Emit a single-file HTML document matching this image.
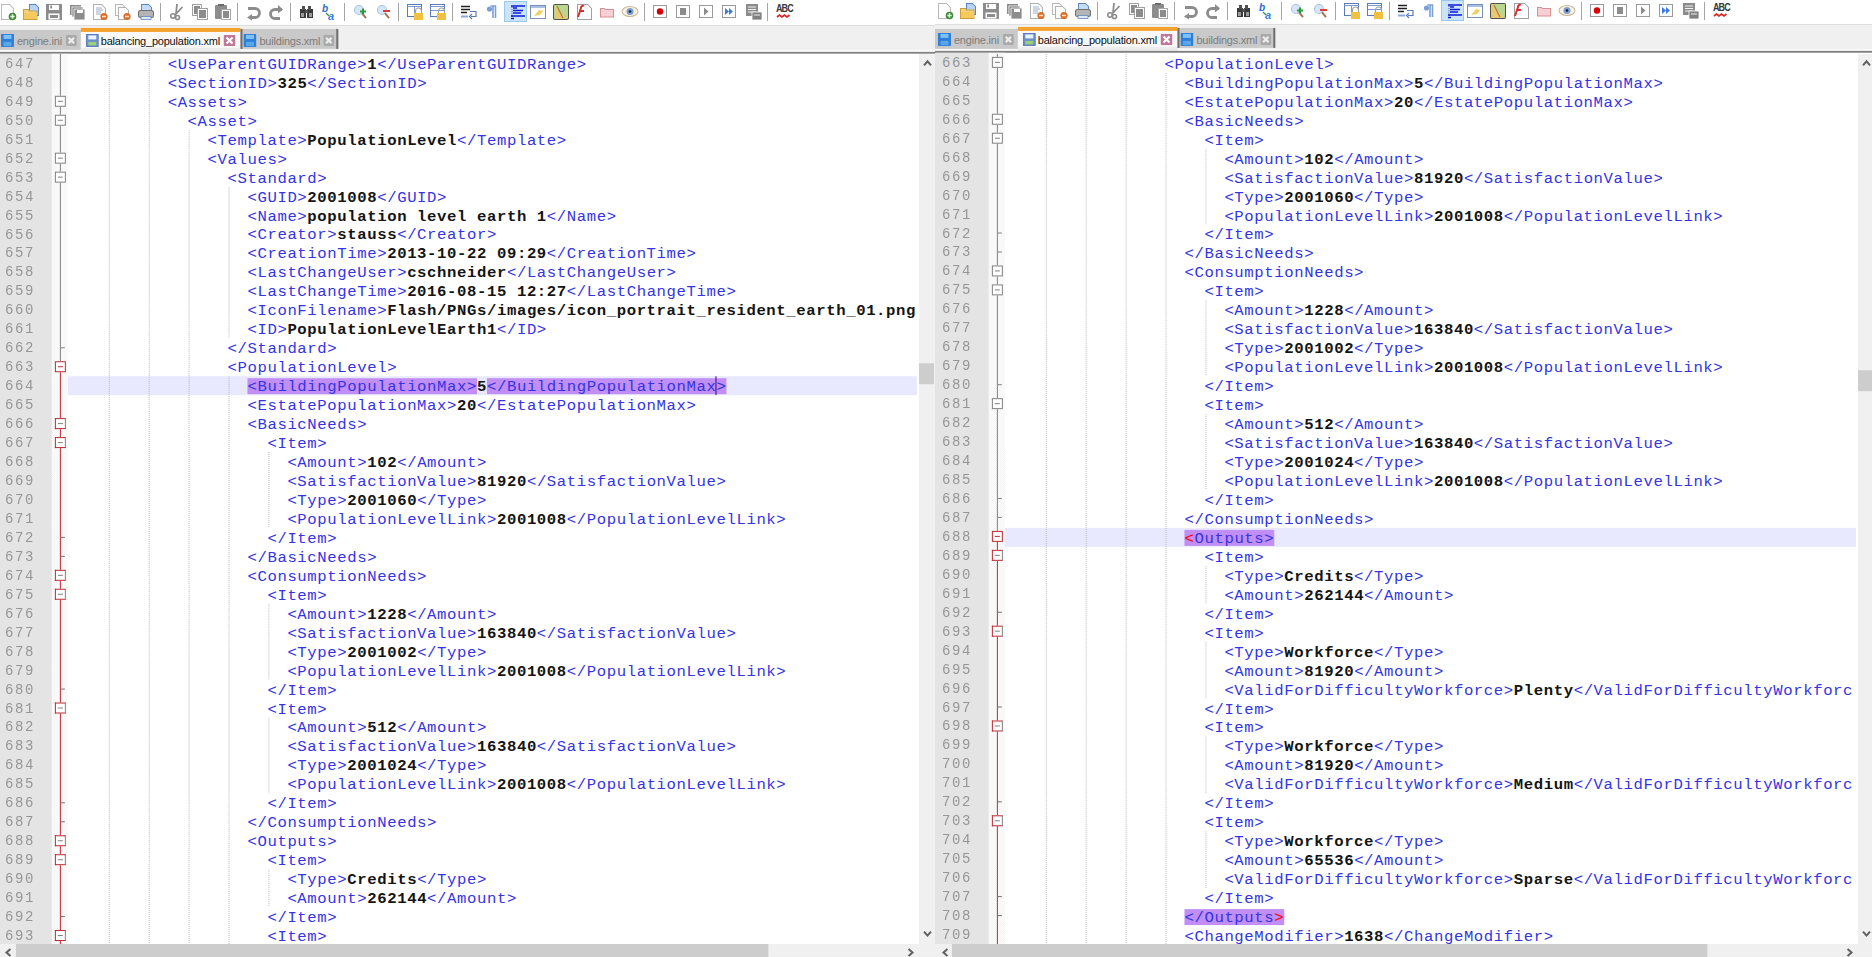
<!DOCTYPE html>
<html><head><meta charset="utf-8"><style>
html,body{margin:0;padding:0;}
body{width:1872px;height:957px;overflow:hidden;position:relative;background:#fff;font-family:"Liberation Sans",sans-serif;}
#root{position:absolute;left:0;top:0;width:1876px;height:959px;overflow:hidden;transform-origin:0 0;transform:scale(0.997868,0.997914);}
.pane{position:absolute;top:0;height:959px;overflow:hidden;}
.pane div,.pane svg{position:absolute;}
.tb{left:0;right:0;height:25px;background:#fff;border-bottom:1px solid #dcdcdc;}
.tabbar{left:0;right:0;height:26px;background:#f0f0f0;}
.darkline{left:0;right:0;height:2px;background:linear-gradient(#767676,#9a9a9a);}
.lnm{left:0;width:54px;background:#e4e4e4;}
.fm{left:54px;width:16px;background-color:#fff;background-image:conic-gradient(#f2f2f2 25%,#fff 25%,#fff 50%,#f2f2f2 50%,#f2f2f2 75%,#fff 75%);background-size:2px 2px;}
.ta{left:70px;background:#fff;}
.cl{left:70px;height:19px;background:#e8e8ff;}
.hl{height:16px;background:#c08ef4;}
.ig{width:1px;background-image:linear-gradient(#b8b8b8 50%,transparent 50%);background-size:1px 2px;}
.txt{left:70px;top:0;height:946px;overflow:hidden;}
.ln{left:0.3px;margin-top:1.5px;height:19px;line-height:19px;white-space:pre;font-family:"Liberation Mono",monospace;font-size:14px;letter-spacing:0.527px;transform-origin:0 0;transform:scaleX(1.12);}
.t{color:#3434e4;}
.x{color:#141414;font-weight:bold;}
.r{color:#ff0000;}
.no{left:7px;margin-top:1px;height:19px;line-height:19px;font-family:"Liberation Mono",monospace;font-size:14px;letter-spacing:1.6px;color:#969696;}
.fl{left:62px;width:1px;background:#808080;}
.fl.red{background:#bc2a32;}
.fb{left:57px;width:9px;height:9px;border:1px solid #808080;background:#fff;}
.fb i{position:absolute;left:2px;top:4px;width:5px;height:1px;background:#808080;}
.fb.allred{border-color:#bc2a32;}
.fb.allred i{background:#bc2a32;}
.fb.halfred{border-left-color:#bc2a32;border-top-color:#bc2a32;border-bottom-color:#bc2a32;}
.ft{left:63px;width:4px;height:1px;background:#808080;}
.ft.red{background:#707070;}
.vs{background:#f0f0f0;width:17px;}
.hs{left:0;height:13px;background:#f0f0f0;}
.thumb{background:#cdcdcd;}
.caret{position:absolute;width:1px;height:19px;background:#400080;}
.tab{height:21px;}
.tab.in{background:#c9c9c9;height:20px;}
.tab.edge{border-left:2px solid #6e6e6e;border-right:2px solid #6e6e6e;width:94px !important;}
.tab.act{background:#f9f9f9;border-top:4px solid #f5a22d;height:20px;}
.tt{font-size:11px;letter-spacing:-0.2px;line-height:14px;white-space:nowrap;}
.tt.gr{color:#7c7c7c;}
.tt.bk{color:#101010;}
.icons{left:0;height:25px;width:900px;}

</style></head><body><div id="root">
<div class="pane" style="left:-2px;width:940px">
<div class="tb" style="top:0px"></div>
<div class="icons" style="top:0px"><svg style="position:absolute;left:2px;top:0" width="940" height="25" viewBox="0 0 940 25"><g transform="scale(1.00213)"><path d="M1.5 4.5 h8.0 l4.0 4.0 v11.0 h-12.0 z" fill="#fdfdfd" stroke="#b8b8b8"/><circle cx="12.5" cy="16.5" r="3.8" fill="#3d8a3a"/><path d="M10.3 16.5h4.4M12.5 14.3v4.4" stroke="#dff5dc" stroke-width="1.6"/><path d="M29.5 4.5 h6.0 l3.0 3.0 v8.0 h-9.0 z" fill="#b8d4f4" stroke="#5a86c8"/><path d="M23.5 9.5h5l1 1.5h7.5v8.5h-13.5z" fill="#f6d27a" stroke="#c9a040"/><rect x="24" y="13" width="13" height="6" fill="#f8c85a"/><rect x="46" y="4" width="16" height="16" fill="#8c8c8c"/><rect x="49" y="5" width="10" height="5" fill="#fff"/><rect x="50.5" y="5.5" width="1.2" height="3" fill="#555"/><rect x="48.5" y="13.5" width="11" height="6" fill="#fff"/><rect x="50" y="15" width="8" height="3" fill="#8c8c8c"/><rect x="70" y="5" width="11" height="10" fill="#8c8c8c"/><rect x="72" y="7" width="11" height="10" fill="#7a7a7a" stroke="#fff" stroke-width=".8"/><rect x="74" y="9" width="11" height="11" fill="#8c8c8c" stroke="#fff" stroke-width=".8"/><rect x="77" y="10" width="6" height="3" fill="#fff"/><path d="M93.5 4.5 h8.0 l4.0 4.0 v11.0 h-12.0 z" fill="#fdfdfd" stroke="#b0b0b0"/><path d="M96 8h6M96 10h7M96 12h5M96 14h5" stroke="#8898b8" stroke-width=".8"/><circle cx="104" cy="16.5" r="3.6" fill="#d8702a"/><path d="M102 16.5h4" stroke="#fde0c8" stroke-width="1.5"/><path d="M115.5 4.5 h7.0 l2.0 2.0 v9.0 h-9.0 z" fill="#fdfdfd" stroke="#b8b8b8"/><path d="M118.5 7.5 h7.0 l3.0 3.0 v9.0 h-10.0 z" fill="#fdfdfd" stroke="#b0b0b0"/><circle cx="127" cy="16.5" r="3.6" fill="#d8702a"/><path d="M125 16.5h4" stroke="#fde0c8" stroke-width="1.5"/><path d="M141.5 4.5 h7.0 l3.0 3.0 v5.0 h-10.0 z" fill="#c4dcf8" stroke="#6088c0"/><rect x="138.5" y="10.5" width="15" height="7" rx="2" fill="#b4b4b4" stroke="#707070"/><rect x="141" y="16.5" width="10" height="3" fill="#dfe8f4" stroke="#6088c0" stroke-width=".8"/><rect x="160" y="3" width="1" height="18" fill="#a5a5a5"/><rect x="237" y="3" width="1" height="18" fill="#a5a5a5"/><rect x="290" y="3" width="1" height="18" fill="#a5a5a5"/><rect x="344" y="3" width="1" height="18" fill="#a5a5a5"/><rect x="398" y="3" width="1" height="18" fill="#a5a5a5"/><rect x="452" y="3" width="1" height="18" fill="#a5a5a5"/><rect x="644" y="3" width="1" height="18" fill="#a5a5a5"/><rect x="767" y="3" width="1" height="18" fill="#a5a5a5"/><path d="M177 4 L176 14 M182.5 7 L175 15" stroke="#8c8c8c" stroke-width="1.8" fill="none"/><circle cx="173" cy="16" r="2.2" fill="none" stroke="#8c8c8c" stroke-width="1.6"/><circle cx="177.5" cy="17.5" r="2" fill="none" stroke="#8c8c8c" stroke-width="1.6"/><rect x="192.5" y="4.5" width="9" height="11" fill="#fff" stroke="#a0a0a0"/><rect x="194" y="6" width="6" height="8" fill="#8c8c8c"/><rect x="197.5" y="8.5" width="10" height="11" fill="#fff" stroke="#a0a0a0"/><rect x="199" y="10" width="7" height="8" fill="#8c8c8c"/><rect x="215" y="5" width="12" height="14" rx="1" fill="#8c8c8c"/><rect x="218" y="4" width="6" height="2" fill="#6a6a6a"/><rect x="221.5" y="9.5" width="9" height="10" fill="#fff" stroke="#a8a8a8"/><rect x="223" y="11" width="6" height="7" fill="#8c8c8c"/><path d="M248 8.5 h7 a4.5 4.5 0 0 1 0 9 h-4" fill="none" stroke="#8c8c8c" stroke-width="2.8"/><path d="M252 14 l-5 3.5 l5 3z" fill="#8c8c8c"/><path d="M282 9.5 h-7 a4.5 4.5 0 0 0 0 9 h5" fill="none" stroke="#8c8c8c" stroke-width="2.8"/><path d="M278 5 l5 4.5 l-5 4z" fill="#8c8c8c"/><rect x="300" y="9" width="6" height="9" fill="#3a3a3a"/><rect x="307" y="9" width="6" height="9" fill="#3a3a3a"/><rect x="302" y="6" width="3" height="4" fill="#505050"/><rect x="308" y="6" width="3" height="4" fill="#505050"/><rect x="305" y="10" width="3" height="3" fill="#505050"/><rect x="301" y="13" width="3" height="4" fill="#9a9a9a"/><rect x="309" y="13" width="3" height="4" fill="#9a9a9a"/><text x="322" y="12" font-family="Liberation Sans" font-weight="bold" font-style="italic" font-size="10" fill="#2a6ad8">b</text><text x="328" y="19.5" font-family="Liberation Sans" font-weight="bold" font-style="italic" font-size="11" fill="#3a80e8">a</text><path d="M326 13 l3 3" stroke="#2a9a3a" stroke-width="1.2"/><circle cx="359" cy="10" r="4.5" fill="#d4e6f8" stroke="#a8c4e0"/><path d="M362 13 l4 5" stroke="#a07858" stroke-width="2"/><path d="M360 11.5h6M363 8.5v6" stroke="#2a9a3a" stroke-width="2"/><circle cx="382" cy="10" r="4.5" fill="#d4e6f8" stroke="#a8c4e0"/><path d="M385 13 l4 5" stroke="#a07858" stroke-width="2"/><path d="M383 11h7" stroke="#e03a3a" stroke-width="2"/><rect x="407.5" y="4.5" width="14" height="12" fill="#fff" stroke="#5a7ab8"/><path d="M407.5 6.5h14M414.5 6.5v10" stroke="#7a9ad0"/><rect x="414" y="13" width="9" height="7" fill="#f0c040"/><path d="M415.5 13 v-2 a3 3 0 0 1 6 0 v2" fill="none" stroke="#a0a0a0" stroke-width="1.2"/><rect x="430.5" y="4.5" width="14" height="12" fill="#fff" stroke="#5a7ab8"/><path d="M430.5 6.5h14M430.5 10.5h14" stroke="#7a9ad0"/><rect x="437" y="13" width="9" height="7" fill="#f0c040"/><path d="M438.5 13 v-2 a3 3 0 0 1 6 0 v2" fill="none" stroke="#a0a0a0" stroke-width="1.2"/><path d="M461 6.5h9M461 9.5h9M461 12.5h6" stroke="#202020" stroke-width="1.4"/><path d="M461 16.5h7" stroke="#8aa8d8" stroke-width="2"/><path d="M470 11.5 h6 v5 h-5" fill="none" stroke="#5a7ab8" stroke-width="1.2"/><path d="M472 14 l-2.5 2.5 l2.5 2.5" fill="none" stroke="#5a7ab8" stroke-width="1.2"/><path d="M490.5 6 h5 v12 M493 6 v12" stroke="#7aa0d8" stroke-width="1.6" fill="none"/><circle cx="489.5" cy="9" r="2.6" fill="#7aa0d8"/><rect x="504.5" y="1.5" width="22" height="20" fill="#cce4f7" stroke="#99c8f0"/><path d="M511 6h14M513 8h4M513 10.5h10M513 13h8M511 16h14M511 18.5h3" stroke="#0a1ad8" stroke-width="1.3"/><path d="M512 7v13" stroke="#0a1ad8" stroke-width=".8" stroke-dasharray="1 1.2"/><rect x="530.5" y="5.5" width="15" height="13" fill="#fff" stroke="#7890b8"/><rect x="531" y="6" width="14" height="2" fill="#a8c0e8"/><path d="M534 16 l5 -6 l4 1 l-3 4 z" fill="#f0d060"/><rect x="553.5" y="4.5" width="15" height="15" rx="1.5" fill="#b8d890" stroke="#505050"/><path d="M555 5 l12 14 h-12z" fill="#e8c870"/><path d="M557 6 l6 12" stroke="#b07840" stroke-width="1.2"/><path d="M577.5 4.5 h10.0 l4.0 4.0 v11.0 h-14.0 z" fill="#fff" stroke="#a0a0a0"/><path d="M578 17 l3 -9 a2 2 0 0 1 3 -2 M579 11h5" stroke="#d83030" stroke-width="2" fill="none"/><path d="M600.5 8.5 h4 l1 1 h8 v7.5 h-13z" fill="#f8d0d4" stroke="#d89098"/><ellipse cx="630" cy="11.5" rx="8" ry="5" fill="#f8f0e0" stroke="#c8b898"/><circle cx="630" cy="11.5" r="3.5" fill="#7aa0d0"/><circle cx="630" cy="11.5" r="1.3" fill="#102040"/><rect x="653.5" y="5.5" width="13" height="12" fill="#fff" stroke="#9a9a9a"/><rect x="676.5" y="5.5" width="13" height="12" fill="#fff" stroke="#9a9a9a"/><rect x="699.5" y="5.5" width="13" height="12" fill="#fff" stroke="#9a9a9a"/><rect x="722.5" y="5.5" width="13" height="12" fill="#fff" stroke="#9a9a9a"/><circle cx="660" cy="11.5" r="3.2" fill="#d80000"/><rect x="680" y="8" width="6" height="7" fill="#8c8c8c"/><path d="M704 7.5 l4.5 4 l-4.5 4z" fill="#8c8c8c"/><path d="M725 8 l4 3.5 l-4 3.5z M729 8 l4 3.5 l-4 3.5z" fill="#3a7ae0"/><rect x="746" y="4" width="12" height="12" fill="#8c8c8c"/><path d="M748 7h8M748 9.5h8M748 12h8" stroke="#fff" stroke-width=".9"/><rect x="752" y="12" width="10" height="8" fill="#808080" stroke="#fff" stroke-width=".8"/><path d="M754 15h6" stroke="#fff" stroke-width=".9"/><text x="776" y="12.4" font-family="Liberation Sans" font-weight="bold" font-size="9" fill="#383838" letter-spacing="-0.9" transform="translate(776 12.4) scale(1 1.3) translate(-776 -12.4)">ABC</text><path d="M777 17 l2.5 -2 l2.5 2 l2.5 -2 l2.5 2 l2.5 -2" fill="none" stroke="#d82828" stroke-width="1.7"/></g></svg></div>
<div class="tabbar" style="top:26px"></div>
<div style="left:0;right:0;top:50px;height:2px;background:#fafafa"></div>
<div class="tab in" style="left:0px;top:30px;width:84px"></div>
<svg class="ic" style="left:3px;top:34px" width="13" height="13" viewBox="0 0 13 13"><rect x="0" y="0" width="13" height="13" fill="#2f7fd8"/><rect x="2.5" y="1" width="8" height="4" fill="#7fc0f5"/><rect x="2.5" y="8" width="8" height="4" fill="#5aa8e8"/></svg>
<div class="tt gr" style="left:19px;top:34px">engine.ini</div>
<svg class="ic" style="left:68px;top:35px" width="11" height="11" viewBox="0 0 11 11"><rect x="0" y="0" width="11" height="11" rx="1.5" fill="#a9a9a9"/><path d="M2.8 2.8 L8.2 8.2 M8.2 2.8 L2.8 8.2" stroke="#ececec" stroke-width="2.2"/></svg>
<div class="tab act" style="left:83px;top:28px;width:160px"></div>
<div style="left:83px;top:48px;width:160px;height:4px;background:#ececec"></div>
<svg class="ic" style="left:88px;top:34px" width="13" height="13" viewBox="0 0 13 13"><rect x="0.5" y="0.5" width="12" height="12" fill="#6f8fc8" stroke="#5878b8"/><rect x="2.5" y="1.5" width="8" height="4" fill="#e8f4ff"/><rect x="2.5" y="8" width="8" height="3.5" fill="#9ad27a"/></svg>
<div class="tt bk" style="left:103px;top:34px">balancing_population.xml</div>
<svg class="ic" style="left:226px;top:35px" width="12" height="11" viewBox="0 0 12 11"><rect x="0" y="0" width="12" height="11" rx="1" fill="#c07898"/><path d="M3 2.5 L9 8.5 M9 2.5 L3 8.5" stroke="#fff" stroke-width="2.2"/></svg>
<div class="tab in edge" style="left:243px;top:29px;width:98px"></div>
<svg class="ic" style="left:246px;top:34px" width="13" height="13" viewBox="0 0 13 13"><rect x="0" y="0" width="13" height="13" fill="#2f7fd8"/><rect x="2.5" y="1" width="8" height="4" fill="#7fc0f5"/><rect x="2.5" y="8" width="8" height="4" fill="#5aa8e8"/></svg>
<div class="tt gr" style="left:262px;top:34px">buildings.xml</div>
<svg class="ic" style="left:326px;top:35px" width="11" height="11" viewBox="0 0 11 11"><rect x="0" y="0" width="11" height="11" rx="1.5" fill="#a9a9a9"/><path d="M2.8 2.8 L8.2 8.2 M8.2 2.8 L2.8 8.2" stroke="#ececec" stroke-width="2.2"/></svg>
<div class="darkline" style="top:52px"></div>
<div class="lnm" style="top:54px;height:892px"></div>
<div class="fm" style="top:54px;height:892px"></div>
<div class="ta" style="top:54px;width:853px;height:892px"></div>
<div class="cl" style="top:377px;width:851px"></div>
<div class="hl" style="top:379px;left:250px;width:230px"></div>
<div class="hl" style="top:379px;left:490px;width:240px"></div>
<div class="ig" style="left:111px;top:54px;height:892px"></div>
<div class="ig" style="left:151px;top:54px;height:892px"></div>
<div class="ig" style="left:191px;top:130px;height:816px"></div>
<div class="ig" style="left:231px;top:187px;height:152px"></div>
<div class="ig" style="left:231px;top:377px;height:569px"></div>
<div class="ig" style="left:271px;top:453px;height:76px"></div>
<div class="ig" style="left:271px;top:605px;height:76px"></div>
<div class="ig" style="left:271px;top:719px;height:76px"></div>
<div class="ig" style="left:271px;top:871px;height:38px"></div>
<div class="txt" style="width:850px">
<div class="ln" style="top:54px">          <span class="t">&lt;UseParentGUIDRange&gt;</span><span class="x">1</span><span class="t">&lt;/UseParentGUIDRange&gt;</span></div>
<div class="ln" style="top:73px">          <span class="t">&lt;SectionID&gt;</span><span class="x">325</span><span class="t">&lt;/SectionID&gt;</span></div>
<div class="ln" style="top:92px">          <span class="t">&lt;Assets&gt;</span></div>
<div class="ln" style="top:111px">            <span class="t">&lt;Asset&gt;</span></div>
<div class="ln" style="top:130px">              <span class="t">&lt;Template&gt;</span><span class="x">PopulationLevel</span><span class="t">&lt;/Template&gt;</span></div>
<div class="ln" style="top:149px">              <span class="t">&lt;Values&gt;</span></div>
<div class="ln" style="top:168px">                <span class="t">&lt;Standard&gt;</span></div>
<div class="ln" style="top:187px">                  <span class="t">&lt;GUID&gt;</span><span class="x">2001008</span><span class="t">&lt;/GUID&gt;</span></div>
<div class="ln" style="top:206px">                  <span class="t">&lt;Name&gt;</span><span class="x">population level earth 1</span><span class="t">&lt;/Name&gt;</span></div>
<div class="ln" style="top:225px">                  <span class="t">&lt;Creator&gt;</span><span class="x">stauss</span><span class="t">&lt;/Creator&gt;</span></div>
<div class="ln" style="top:244px">                  <span class="t">&lt;CreationTime&gt;</span><span class="x">2013-10-22 09:29</span><span class="t">&lt;/CreationTime&gt;</span></div>
<div class="ln" style="top:263px">                  <span class="t">&lt;LastChangeUser&gt;</span><span class="x">cschneider</span><span class="t">&lt;/LastChangeUser&gt;</span></div>
<div class="ln" style="top:282px">                  <span class="t">&lt;LastChangeTime&gt;</span><span class="x">2016-08-15 12:27</span><span class="t">&lt;/LastChangeTime&gt;</span></div>
<div class="ln" style="top:301px">                  <span class="t">&lt;IconFilename&gt;</span><span class="x">Flash/PNGs/images/icon_portrait_resident_earth_01.png</span><span class="t">&lt;/IconFilename&gt;</span></div>
<div class="ln" style="top:320px">                  <span class="t">&lt;ID&gt;</span><span class="x">PopulationLevelEarth1</span><span class="t">&lt;/ID&gt;</span></div>
<div class="ln" style="top:339px">                <span class="t">&lt;/Standard&gt;</span></div>
<div class="ln" style="top:358px">                <span class="t">&lt;PopulationLevel&gt;</span></div>
<div class="ln" style="top:377px">                  <span class="t">&lt;BuildingPopulationMax&gt;</span><span class="x">5</span><span class="t">&lt;/BuildingPopulationMax&gt;</span></div>
<div class="ln" style="top:396px">                  <span class="t">&lt;EstatePopulationMax&gt;</span><span class="x">20</span><span class="t">&lt;/EstatePopulationMax&gt;</span></div>
<div class="ln" style="top:415px">                  <span class="t">&lt;BasicNeeds&gt;</span></div>
<div class="ln" style="top:434px">                    <span class="t">&lt;Item&gt;</span></div>
<div class="ln" style="top:453px">                      <span class="t">&lt;Amount&gt;</span><span class="x">102</span><span class="t">&lt;/Amount&gt;</span></div>
<div class="ln" style="top:472px">                      <span class="t">&lt;SatisfactionValue&gt;</span><span class="x">81920</span><span class="t">&lt;/SatisfactionValue&gt;</span></div>
<div class="ln" style="top:491px">                      <span class="t">&lt;Type&gt;</span><span class="x">2001060</span><span class="t">&lt;/Type&gt;</span></div>
<div class="ln" style="top:510px">                      <span class="t">&lt;PopulationLevelLink&gt;</span><span class="x">2001008</span><span class="t">&lt;/PopulationLevelLink&gt;</span></div>
<div class="ln" style="top:529px">                    <span class="t">&lt;/Item&gt;</span></div>
<div class="ln" style="top:548px">                  <span class="t">&lt;/BasicNeeds&gt;</span></div>
<div class="ln" style="top:567px">                  <span class="t">&lt;ConsumptionNeeds&gt;</span></div>
<div class="ln" style="top:586px">                    <span class="t">&lt;Item&gt;</span></div>
<div class="ln" style="top:605px">                      <span class="t">&lt;Amount&gt;</span><span class="x">1228</span><span class="t">&lt;/Amount&gt;</span></div>
<div class="ln" style="top:624px">                      <span class="t">&lt;SatisfactionValue&gt;</span><span class="x">163840</span><span class="t">&lt;/SatisfactionValue&gt;</span></div>
<div class="ln" style="top:643px">                      <span class="t">&lt;Type&gt;</span><span class="x">2001002</span><span class="t">&lt;/Type&gt;</span></div>
<div class="ln" style="top:662px">                      <span class="t">&lt;PopulationLevelLink&gt;</span><span class="x">2001008</span><span class="t">&lt;/PopulationLevelLink&gt;</span></div>
<div class="ln" style="top:681px">                    <span class="t">&lt;/Item&gt;</span></div>
<div class="ln" style="top:700px">                    <span class="t">&lt;Item&gt;</span></div>
<div class="ln" style="top:719px">                      <span class="t">&lt;Amount&gt;</span><span class="x">512</span><span class="t">&lt;/Amount&gt;</span></div>
<div class="ln" style="top:738px">                      <span class="t">&lt;SatisfactionValue&gt;</span><span class="x">163840</span><span class="t">&lt;/SatisfactionValue&gt;</span></div>
<div class="ln" style="top:757px">                      <span class="t">&lt;Type&gt;</span><span class="x">2001024</span><span class="t">&lt;/Type&gt;</span></div>
<div class="ln" style="top:776px">                      <span class="t">&lt;PopulationLevelLink&gt;</span><span class="x">2001008</span><span class="t">&lt;/PopulationLevelLink&gt;</span></div>
<div class="ln" style="top:795px">                    <span class="t">&lt;/Item&gt;</span></div>
<div class="ln" style="top:814px">                  <span class="t">&lt;/ConsumptionNeeds&gt;</span></div>
<div class="ln" style="top:833px">                  <span class="t">&lt;Outputs&gt;</span></div>
<div class="ln" style="top:852px">                    <span class="t">&lt;Item&gt;</span></div>
<div class="ln" style="top:871px">                      <span class="t">&lt;Type&gt;</span><span class="x">Credits</span><span class="t">&lt;/Type&gt;</span></div>
<div class="ln" style="top:890px">                      <span class="t">&lt;Amount&gt;</span><span class="x">262144</span><span class="t">&lt;/Amount&gt;</span></div>
<div class="ln" style="top:909px">                    <span class="t">&lt;/Item&gt;</span></div>
<div class="ln" style="top:928px">                    <span class="t">&lt;Item&gt;</span></div>
</div>
<div class="no" style="top:54px">647</div>
<div class="no" style="top:73px">648</div>
<div class="no" style="top:92px">649</div>
<div class="no" style="top:111px">650</div>
<div class="no" style="top:130px">651</div>
<div class="no" style="top:149px">652</div>
<div class="no" style="top:168px">653</div>
<div class="no" style="top:187px">654</div>
<div class="no" style="top:206px">655</div>
<div class="no" style="top:225px">656</div>
<div class="no" style="top:244px">657</div>
<div class="no" style="top:263px">658</div>
<div class="no" style="top:282px">659</div>
<div class="no" style="top:301px">660</div>
<div class="no" style="top:320px">661</div>
<div class="no" style="top:339px">662</div>
<div class="no" style="top:358px">663</div>
<div class="no" style="top:377px">664</div>
<div class="no" style="top:396px">665</div>
<div class="no" style="top:415px">666</div>
<div class="no" style="top:434px">667</div>
<div class="no" style="top:453px">668</div>
<div class="no" style="top:472px">669</div>
<div class="no" style="top:491px">670</div>
<div class="no" style="top:510px">671</div>
<div class="no" style="top:529px">672</div>
<div class="no" style="top:548px">673</div>
<div class="no" style="top:567px">674</div>
<div class="no" style="top:586px">675</div>
<div class="no" style="top:605px">676</div>
<div class="no" style="top:624px">677</div>
<div class="no" style="top:643px">678</div>
<div class="no" style="top:662px">679</div>
<div class="no" style="top:681px">680</div>
<div class="no" style="top:700px">681</div>
<div class="no" style="top:719px">682</div>
<div class="no" style="top:738px">683</div>
<div class="no" style="top:757px">684</div>
<div class="no" style="top:776px">685</div>
<div class="no" style="top:795px">686</div>
<div class="no" style="top:814px">687</div>
<div class="no" style="top:833px">688</div>
<div class="no" style="top:852px">689</div>
<div class="no" style="top:871px">690</div>
<div class="no" style="top:890px">691</div>
<div class="no" style="top:909px">692</div>
<div class="no" style="top:928px">693</div>
<div class="fl" style="top:54px;height:308px"></div>
<div class="fl red" style="top:362px;height:584px"></div>
<div class="fb" style="top:96px"><i></i></div>
<div class="fb" style="top:115px"><i></i></div>
<div class="fb" style="top:153px"><i></i></div>
<div class="fb" style="top:172px"><i></i></div>
<div class="ft" style="top:348px"></div>
<div class="fb allred" style="top:362px"><i></i></div>
<div class="fb halfred" style="top:419px"><i></i></div>
<div class="fb halfred" style="top:438px"><i></i></div>
<div class="ft red" style="top:538px"></div>
<div class="ft red" style="top:557px"></div>
<div class="fb halfred" style="top:571px"><i></i></div>
<div class="fb halfred" style="top:590px"><i></i></div>
<div class="ft red" style="top:690px"></div>
<div class="fb halfred" style="top:704px"><i></i></div>
<div class="ft red" style="top:804px"></div>
<div class="ft red" style="top:823px"></div>
<div class="fb halfred" style="top:837px"><i></i></div>
<div class="fb halfred" style="top:856px"><i></i></div>
<div class="ft red" style="top:918px"></div>
<div class="fb halfred" style="top:932px"><i></i></div>
<div class="vs" style="left:923px;top:54px;height:893px"></div>
<svg class="arr" style="left:927px;top:59px" width="9" height="8" viewBox="0 0 9 8"><path d="M1 6.5 L4.5 2.5 L8 6.5" fill="none" stroke="#606060" stroke-width="2"/></svg>
<svg class="arr" style="left:927px;top:932px" width="9" height="8" viewBox="0 0 9 8"><path d="M1 1.5 L4.5 5.5 L8 1.5" fill="none" stroke="#606060" stroke-width="2"/></svg>
<div class="thumb" style="left:923px;top:364px;width:15px;height:21px"></div>
<div class="hs" style="top:946px;width:940px"></div>
<svg class="arr" style="left:6px;top:950px" width="8" height="9" viewBox="0 0 8 9"><path d="M6.5 1 L2.5 4.5 L6.5 8" fill="none" stroke="#606060" stroke-width="2"/></svg>
<svg class="arr" style="left:911px;top:950px" width="8" height="9" viewBox="0 0 8 9"><path d="M1.5 1 L5.5 4.5 L1.5 8" fill="none" stroke="#606060" stroke-width="2"/></svg>
<div class="thumb" style="left:18px;top:946px;width:754px;height:13px"></div>
</div>
<div class="pane" style="left:937px;width:942px">
<div class="tb" style="top:-1px"></div>
<div class="icons" style="top:-1px"><svg style="position:absolute;left:2px;top:0" width="940" height="25" viewBox="0 0 940 25"><g transform="scale(1.00213)"><path d="M1.5 4.5 h8.0 l4.0 4.0 v11.0 h-12.0 z" fill="#fdfdfd" stroke="#b8b8b8"/><circle cx="12.5" cy="16.5" r="3.8" fill="#3d8a3a"/><path d="M10.3 16.5h4.4M12.5 14.3v4.4" stroke="#dff5dc" stroke-width="1.6"/><path d="M29.5 4.5 h6.0 l3.0 3.0 v8.0 h-9.0 z" fill="#b8d4f4" stroke="#5a86c8"/><path d="M23.5 9.5h5l1 1.5h7.5v8.5h-13.5z" fill="#f6d27a" stroke="#c9a040"/><rect x="24" y="13" width="13" height="6" fill="#f8c85a"/><rect x="46" y="4" width="16" height="16" fill="#8c8c8c"/><rect x="49" y="5" width="10" height="5" fill="#fff"/><rect x="50.5" y="5.5" width="1.2" height="3" fill="#555"/><rect x="48.5" y="13.5" width="11" height="6" fill="#fff"/><rect x="50" y="15" width="8" height="3" fill="#8c8c8c"/><rect x="70" y="5" width="11" height="10" fill="#8c8c8c"/><rect x="72" y="7" width="11" height="10" fill="#7a7a7a" stroke="#fff" stroke-width=".8"/><rect x="74" y="9" width="11" height="11" fill="#8c8c8c" stroke="#fff" stroke-width=".8"/><rect x="77" y="10" width="6" height="3" fill="#fff"/><path d="M93.5 4.5 h8.0 l4.0 4.0 v11.0 h-12.0 z" fill="#fdfdfd" stroke="#b0b0b0"/><path d="M96 8h6M96 10h7M96 12h5M96 14h5" stroke="#8898b8" stroke-width=".8"/><circle cx="104" cy="16.5" r="3.6" fill="#d8702a"/><path d="M102 16.5h4" stroke="#fde0c8" stroke-width="1.5"/><path d="M115.5 4.5 h7.0 l2.0 2.0 v9.0 h-9.0 z" fill="#fdfdfd" stroke="#b8b8b8"/><path d="M118.5 7.5 h7.0 l3.0 3.0 v9.0 h-10.0 z" fill="#fdfdfd" stroke="#b0b0b0"/><circle cx="127" cy="16.5" r="3.6" fill="#d8702a"/><path d="M125 16.5h4" stroke="#fde0c8" stroke-width="1.5"/><path d="M141.5 4.5 h7.0 l3.0 3.0 v5.0 h-10.0 z" fill="#c4dcf8" stroke="#6088c0"/><rect x="138.5" y="10.5" width="15" height="7" rx="2" fill="#b4b4b4" stroke="#707070"/><rect x="141" y="16.5" width="10" height="3" fill="#dfe8f4" stroke="#6088c0" stroke-width=".8"/><rect x="160" y="3" width="1" height="18" fill="#a5a5a5"/><rect x="237" y="3" width="1" height="18" fill="#a5a5a5"/><rect x="290" y="3" width="1" height="18" fill="#a5a5a5"/><rect x="344" y="3" width="1" height="18" fill="#a5a5a5"/><rect x="398" y="3" width="1" height="18" fill="#a5a5a5"/><rect x="452" y="3" width="1" height="18" fill="#a5a5a5"/><rect x="644" y="3" width="1" height="18" fill="#a5a5a5"/><rect x="767" y="3" width="1" height="18" fill="#a5a5a5"/><path d="M177 4 L176 14 M182.5 7 L175 15" stroke="#8c8c8c" stroke-width="1.8" fill="none"/><circle cx="173" cy="16" r="2.2" fill="none" stroke="#8c8c8c" stroke-width="1.6"/><circle cx="177.5" cy="17.5" r="2" fill="none" stroke="#8c8c8c" stroke-width="1.6"/><rect x="192.5" y="4.5" width="9" height="11" fill="#fff" stroke="#a0a0a0"/><rect x="194" y="6" width="6" height="8" fill="#8c8c8c"/><rect x="197.5" y="8.5" width="10" height="11" fill="#fff" stroke="#a0a0a0"/><rect x="199" y="10" width="7" height="8" fill="#8c8c8c"/><rect x="215" y="5" width="12" height="14" rx="1" fill="#8c8c8c"/><rect x="218" y="4" width="6" height="2" fill="#6a6a6a"/><rect x="221.5" y="9.5" width="9" height="10" fill="#fff" stroke="#a8a8a8"/><rect x="223" y="11" width="6" height="7" fill="#8c8c8c"/><path d="M248 8.5 h7 a4.5 4.5 0 0 1 0 9 h-4" fill="none" stroke="#8c8c8c" stroke-width="2.8"/><path d="M252 14 l-5 3.5 l5 3z" fill="#8c8c8c"/><path d="M282 9.5 h-7 a4.5 4.5 0 0 0 0 9 h5" fill="none" stroke="#8c8c8c" stroke-width="2.8"/><path d="M278 5 l5 4.5 l-5 4z" fill="#8c8c8c"/><rect x="300" y="9" width="6" height="9" fill="#3a3a3a"/><rect x="307" y="9" width="6" height="9" fill="#3a3a3a"/><rect x="302" y="6" width="3" height="4" fill="#505050"/><rect x="308" y="6" width="3" height="4" fill="#505050"/><rect x="305" y="10" width="3" height="3" fill="#505050"/><rect x="301" y="13" width="3" height="4" fill="#9a9a9a"/><rect x="309" y="13" width="3" height="4" fill="#9a9a9a"/><text x="322" y="12" font-family="Liberation Sans" font-weight="bold" font-style="italic" font-size="10" fill="#2a6ad8">b</text><text x="328" y="19.5" font-family="Liberation Sans" font-weight="bold" font-style="italic" font-size="11" fill="#3a80e8">a</text><path d="M326 13 l3 3" stroke="#2a9a3a" stroke-width="1.2"/><circle cx="359" cy="10" r="4.5" fill="#d4e6f8" stroke="#a8c4e0"/><path d="M362 13 l4 5" stroke="#a07858" stroke-width="2"/><path d="M360 11.5h6M363 8.5v6" stroke="#2a9a3a" stroke-width="2"/><circle cx="382" cy="10" r="4.5" fill="#d4e6f8" stroke="#a8c4e0"/><path d="M385 13 l4 5" stroke="#a07858" stroke-width="2"/><path d="M383 11h7" stroke="#e03a3a" stroke-width="2"/><rect x="407.5" y="4.5" width="14" height="12" fill="#fff" stroke="#5a7ab8"/><path d="M407.5 6.5h14M414.5 6.5v10" stroke="#7a9ad0"/><rect x="414" y="13" width="9" height="7" fill="#f0c040"/><path d="M415.5 13 v-2 a3 3 0 0 1 6 0 v2" fill="none" stroke="#a0a0a0" stroke-width="1.2"/><rect x="430.5" y="4.5" width="14" height="12" fill="#fff" stroke="#5a7ab8"/><path d="M430.5 6.5h14M430.5 10.5h14" stroke="#7a9ad0"/><rect x="437" y="13" width="9" height="7" fill="#f0c040"/><path d="M438.5 13 v-2 a3 3 0 0 1 6 0 v2" fill="none" stroke="#a0a0a0" stroke-width="1.2"/><path d="M461 6.5h9M461 9.5h9M461 12.5h6" stroke="#202020" stroke-width="1.4"/><path d="M461 16.5h7" stroke="#8aa8d8" stroke-width="2"/><path d="M470 11.5 h6 v5 h-5" fill="none" stroke="#5a7ab8" stroke-width="1.2"/><path d="M472 14 l-2.5 2.5 l2.5 2.5" fill="none" stroke="#5a7ab8" stroke-width="1.2"/><path d="M490.5 6 h5 v12 M493 6 v12" stroke="#7aa0d8" stroke-width="1.6" fill="none"/><circle cx="489.5" cy="9" r="2.6" fill="#7aa0d8"/><rect x="504.5" y="1.5" width="22" height="20" fill="#cce4f7" stroke="#99c8f0"/><path d="M511 6h14M513 8h4M513 10.5h10M513 13h8M511 16h14M511 18.5h3" stroke="#0a1ad8" stroke-width="1.3"/><path d="M512 7v13" stroke="#0a1ad8" stroke-width=".8" stroke-dasharray="1 1.2"/><rect x="530.5" y="5.5" width="15" height="13" fill="#fff" stroke="#7890b8"/><rect x="531" y="6" width="14" height="2" fill="#a8c0e8"/><path d="M534 16 l5 -6 l4 1 l-3 4 z" fill="#f0d060"/><rect x="553.5" y="4.5" width="15" height="15" rx="1.5" fill="#b8d890" stroke="#505050"/><path d="M555 5 l12 14 h-12z" fill="#e8c870"/><path d="M557 6 l6 12" stroke="#b07840" stroke-width="1.2"/><path d="M577.5 4.5 h10.0 l4.0 4.0 v11.0 h-14.0 z" fill="#fff" stroke="#a0a0a0"/><path d="M578 17 l3 -9 a2 2 0 0 1 3 -2 M579 11h5" stroke="#d83030" stroke-width="2" fill="none"/><path d="M600.5 8.5 h4 l1 1 h8 v7.5 h-13z" fill="#f8d0d4" stroke="#d89098"/><ellipse cx="630" cy="11.5" rx="8" ry="5" fill="#f8f0e0" stroke="#c8b898"/><circle cx="630" cy="11.5" r="3.5" fill="#7aa0d0"/><circle cx="630" cy="11.5" r="1.3" fill="#102040"/><rect x="653.5" y="5.5" width="13" height="12" fill="#fff" stroke="#9a9a9a"/><rect x="676.5" y="5.5" width="13" height="12" fill="#fff" stroke="#9a9a9a"/><rect x="699.5" y="5.5" width="13" height="12" fill="#fff" stroke="#9a9a9a"/><rect x="722.5" y="5.5" width="13" height="12" fill="#fff" stroke="#9a9a9a"/><circle cx="660" cy="11.5" r="3.2" fill="#d80000"/><rect x="680" y="8" width="6" height="7" fill="#8c8c8c"/><path d="M704 7.5 l4.5 4 l-4.5 4z" fill="#8c8c8c"/><path d="M725 8 l4 3.5 l-4 3.5z M729 8 l4 3.5 l-4 3.5z" fill="#3a7ae0"/><rect x="746" y="4" width="12" height="12" fill="#8c8c8c"/><path d="M748 7h8M748 9.5h8M748 12h8" stroke="#fff" stroke-width=".9"/><rect x="752" y="12" width="10" height="8" fill="#808080" stroke="#fff" stroke-width=".8"/><path d="M754 15h6" stroke="#fff" stroke-width=".9"/><text x="776" y="12.4" font-family="Liberation Sans" font-weight="bold" font-size="9" fill="#383838" letter-spacing="-0.9" transform="translate(776 12.4) scale(1 1.3) translate(-776 -12.4)">ABC</text><path d="M777 17 l2.5 -2 l2.5 2 l2.5 -2 l2.5 2 l2.5 -2" fill="none" stroke="#d82828" stroke-width="1.7"/></g></svg></div>
<div class="tabbar" style="top:25px"></div>
<div style="left:0;right:0;top:49px;height:2px;background:#fafafa"></div>
<div class="tab in" style="left:0px;top:29px;width:84px"></div>
<svg class="ic" style="left:3px;top:33px" width="13" height="13" viewBox="0 0 13 13"><rect x="0" y="0" width="13" height="13" fill="#2f7fd8"/><rect x="2.5" y="1" width="8" height="4" fill="#7fc0f5"/><rect x="2.5" y="8" width="8" height="4" fill="#5aa8e8"/></svg>
<div class="tt gr" style="left:19px;top:33px">engine.ini</div>
<svg class="ic" style="left:68px;top:34px" width="11" height="11" viewBox="0 0 11 11"><rect x="0" y="0" width="11" height="11" rx="1.5" fill="#a9a9a9"/><path d="M2.8 2.8 L8.2 8.2 M8.2 2.8 L2.8 8.2" stroke="#ececec" stroke-width="2.2"/></svg>
<div class="tab act" style="left:83px;top:27px;width:160px"></div>
<div style="left:83px;top:47px;width:160px;height:4px;background:#ececec"></div>
<svg class="ic" style="left:88px;top:33px" width="13" height="13" viewBox="0 0 13 13"><rect x="0.5" y="0.5" width="12" height="12" fill="#6f8fc8" stroke="#5878b8"/><rect x="2.5" y="1.5" width="8" height="4" fill="#e8f4ff"/><rect x="2.5" y="8" width="8" height="3.5" fill="#9ad27a"/></svg>
<div class="tt bk" style="left:103px;top:33px">balancing_population.xml</div>
<svg class="ic" style="left:226px;top:34px" width="12" height="11" viewBox="0 0 12 11"><rect x="0" y="0" width="12" height="11" rx="1" fill="#c07898"/><path d="M3 2.5 L9 8.5 M9 2.5 L3 8.5" stroke="#fff" stroke-width="2.2"/></svg>
<div class="tab in edge" style="left:243px;top:28px;width:98px"></div>
<svg class="ic" style="left:246px;top:33px" width="13" height="13" viewBox="0 0 13 13"><rect x="0" y="0" width="13" height="13" fill="#2f7fd8"/><rect x="2.5" y="1" width="8" height="4" fill="#7fc0f5"/><rect x="2.5" y="8" width="8" height="4" fill="#5aa8e8"/></svg>
<div class="tt gr" style="left:262px;top:33px">buildings.xml</div>
<svg class="ic" style="left:326px;top:34px" width="11" height="11" viewBox="0 0 11 11"><rect x="0" y="0" width="11" height="11" rx="1.5" fill="#a9a9a9"/><path d="M2.8 2.8 L8.2 8.2 M8.2 2.8 L2.8 8.2" stroke="#ececec" stroke-width="2.2"/></svg>
<div class="darkline" style="top:51px"></div>
<div class="lnm" style="top:53px;height:893px"></div>
<div class="fm" style="top:53px;height:893px"></div>
<div class="ta" style="top:54px;width:855px;height:892px"></div>
<div class="cl" style="top:529px;width:853px"></div>
<div class="hl" style="top:531px;left:250px;width:90px"></div>
<div class="hl" style="top:911px;left:250px;width:100px"></div>
<div class="ig" style="left:111px;top:54px;height:892px"></div>
<div class="ig" style="left:151px;top:54px;height:892px"></div>
<div class="ig" style="left:191px;top:54px;height:892px"></div>
<div class="ig" style="left:231px;top:73px;height:873px"></div>
<div class="ig" style="left:271px;top:149px;height:76px"></div>
<div class="ig" style="left:271px;top:301px;height:76px"></div>
<div class="ig" style="left:271px;top:415px;height:76px"></div>
<div class="ig" style="left:271px;top:567px;height:38px"></div>
<div class="ig" style="left:271px;top:643px;height:57px"></div>
<div class="ig" style="left:271px;top:738px;height:57px"></div>
<div class="ig" style="left:271px;top:833px;height:57px"></div>
<div class="txt" style="width:850px">
<div class="ln" style="top:54px">                <span class="t">&lt;PopulationLevel&gt;</span></div>
<div class="ln" style="top:73px">                  <span class="t">&lt;BuildingPopulationMax&gt;</span><span class="x">5</span><span class="t">&lt;/BuildingPopulationMax&gt;</span></div>
<div class="ln" style="top:92px">                  <span class="t">&lt;EstatePopulationMax&gt;</span><span class="x">20</span><span class="t">&lt;/EstatePopulationMax&gt;</span></div>
<div class="ln" style="top:111px">                  <span class="t">&lt;BasicNeeds&gt;</span></div>
<div class="ln" style="top:130px">                    <span class="t">&lt;Item&gt;</span></div>
<div class="ln" style="top:149px">                      <span class="t">&lt;Amount&gt;</span><span class="x">102</span><span class="t">&lt;/Amount&gt;</span></div>
<div class="ln" style="top:168px">                      <span class="t">&lt;SatisfactionValue&gt;</span><span class="x">81920</span><span class="t">&lt;/SatisfactionValue&gt;</span></div>
<div class="ln" style="top:187px">                      <span class="t">&lt;Type&gt;</span><span class="x">2001060</span><span class="t">&lt;/Type&gt;</span></div>
<div class="ln" style="top:206px">                      <span class="t">&lt;PopulationLevelLink&gt;</span><span class="x">2001008</span><span class="t">&lt;/PopulationLevelLink&gt;</span></div>
<div class="ln" style="top:225px">                    <span class="t">&lt;/Item&gt;</span></div>
<div class="ln" style="top:244px">                  <span class="t">&lt;/BasicNeeds&gt;</span></div>
<div class="ln" style="top:263px">                  <span class="t">&lt;ConsumptionNeeds&gt;</span></div>
<div class="ln" style="top:282px">                    <span class="t">&lt;Item&gt;</span></div>
<div class="ln" style="top:301px">                      <span class="t">&lt;Amount&gt;</span><span class="x">1228</span><span class="t">&lt;/Amount&gt;</span></div>
<div class="ln" style="top:320px">                      <span class="t">&lt;SatisfactionValue&gt;</span><span class="x">163840</span><span class="t">&lt;/SatisfactionValue&gt;</span></div>
<div class="ln" style="top:339px">                      <span class="t">&lt;Type&gt;</span><span class="x">2001002</span><span class="t">&lt;/Type&gt;</span></div>
<div class="ln" style="top:358px">                      <span class="t">&lt;PopulationLevelLink&gt;</span><span class="x">2001008</span><span class="t">&lt;/PopulationLevelLink&gt;</span></div>
<div class="ln" style="top:377px">                    <span class="t">&lt;/Item&gt;</span></div>
<div class="ln" style="top:396px">                    <span class="t">&lt;Item&gt;</span></div>
<div class="ln" style="top:415px">                      <span class="t">&lt;Amount&gt;</span><span class="x">512</span><span class="t">&lt;/Amount&gt;</span></div>
<div class="ln" style="top:434px">                      <span class="t">&lt;SatisfactionValue&gt;</span><span class="x">163840</span><span class="t">&lt;/SatisfactionValue&gt;</span></div>
<div class="ln" style="top:453px">                      <span class="t">&lt;Type&gt;</span><span class="x">2001024</span><span class="t">&lt;/Type&gt;</span></div>
<div class="ln" style="top:472px">                      <span class="t">&lt;PopulationLevelLink&gt;</span><span class="x">2001008</span><span class="t">&lt;/PopulationLevelLink&gt;</span></div>
<div class="ln" style="top:491px">                    <span class="t">&lt;/Item&gt;</span></div>
<div class="ln" style="top:510px">                  <span class="t">&lt;/ConsumptionNeeds&gt;</span></div>
<div class="ln" style="top:529px">                  <span class="r">&lt;</span><span class="t">Outputs&gt;</span></div>
<div class="ln" style="top:548px">                    <span class="t">&lt;Item&gt;</span></div>
<div class="ln" style="top:567px">                      <span class="t">&lt;Type&gt;</span><span class="x">Credits</span><span class="t">&lt;/Type&gt;</span></div>
<div class="ln" style="top:586px">                      <span class="t">&lt;Amount&gt;</span><span class="x">262144</span><span class="t">&lt;/Amount&gt;</span></div>
<div class="ln" style="top:605px">                    <span class="t">&lt;/Item&gt;</span></div>
<div class="ln" style="top:624px">                    <span class="t">&lt;Item&gt;</span></div>
<div class="ln" style="top:643px">                      <span class="t">&lt;Type&gt;</span><span class="x">Workforce</span><span class="t">&lt;/Type&gt;</span></div>
<div class="ln" style="top:662px">                      <span class="t">&lt;Amount&gt;</span><span class="x">81920</span><span class="t">&lt;/Amount&gt;</span></div>
<div class="ln" style="top:681px">                      <span class="t">&lt;ValidForDifficultyWorkforce&gt;</span><span class="x">Plenty</span><span class="t">&lt;/ValidForDifficultyWorkforce&gt;</span></div>
<div class="ln" style="top:700px">                    <span class="t">&lt;/Item&gt;</span></div>
<div class="ln" style="top:719px">                    <span class="t">&lt;Item&gt;</span></div>
<div class="ln" style="top:738px">                      <span class="t">&lt;Type&gt;</span><span class="x">Workforce</span><span class="t">&lt;/Type&gt;</span></div>
<div class="ln" style="top:757px">                      <span class="t">&lt;Amount&gt;</span><span class="x">81920</span><span class="t">&lt;/Amount&gt;</span></div>
<div class="ln" style="top:776px">                      <span class="t">&lt;ValidForDifficultyWorkforce&gt;</span><span class="x">Medium</span><span class="t">&lt;/ValidForDifficultyWorkforce&gt;</span></div>
<div class="ln" style="top:795px">                    <span class="t">&lt;/Item&gt;</span></div>
<div class="ln" style="top:814px">                    <span class="t">&lt;Item&gt;</span></div>
<div class="ln" style="top:833px">                      <span class="t">&lt;Type&gt;</span><span class="x">Workforce</span><span class="t">&lt;/Type&gt;</span></div>
<div class="ln" style="top:852px">                      <span class="t">&lt;Amount&gt;</span><span class="x">65536</span><span class="t">&lt;/Amount&gt;</span></div>
<div class="ln" style="top:871px">                      <span class="t">&lt;ValidForDifficultyWorkforce&gt;</span><span class="x">Sparse</span><span class="t">&lt;/ValidForDifficultyWorkforce&gt;</span></div>
<div class="ln" style="top:890px">                    <span class="t">&lt;/Item&gt;</span></div>
<div class="ln" style="top:909px">                  <span class="t">&lt;/Outputs</span><span class="r">&gt;</span></div>
<div class="ln" style="top:928px">                  <span class="t">&lt;ChangeModifier&gt;</span><span class="x">1638</span><span class="t">&lt;/ChangeModifier&gt;</span></div>
</div>
<div class="no" style="top:53px">663</div>
<div class="no" style="top:72px">664</div>
<div class="no" style="top:91px">665</div>
<div class="no" style="top:110px">666</div>
<div class="no" style="top:129px">667</div>
<div class="no" style="top:148px">668</div>
<div class="no" style="top:167px">669</div>
<div class="no" style="top:186px">670</div>
<div class="no" style="top:205px">671</div>
<div class="no" style="top:224px">672</div>
<div class="no" style="top:243px">673</div>
<div class="no" style="top:262px">674</div>
<div class="no" style="top:281px">675</div>
<div class="no" style="top:300px">676</div>
<div class="no" style="top:319px">677</div>
<div class="no" style="top:338px">678</div>
<div class="no" style="top:357px">679</div>
<div class="no" style="top:376px">680</div>
<div class="no" style="top:395px">681</div>
<div class="no" style="top:414px">682</div>
<div class="no" style="top:433px">683</div>
<div class="no" style="top:452px">684</div>
<div class="no" style="top:471px">685</div>
<div class="no" style="top:490px">686</div>
<div class="no" style="top:509px">687</div>
<div class="no" style="top:528px">688</div>
<div class="no" style="top:547px">689</div>
<div class="no" style="top:566px">690</div>
<div class="no" style="top:585px">691</div>
<div class="no" style="top:604px">692</div>
<div class="no" style="top:623px">693</div>
<div class="no" style="top:642px">694</div>
<div class="no" style="top:661px">695</div>
<div class="no" style="top:680px">696</div>
<div class="no" style="top:699px">697</div>
<div class="no" style="top:718px">698</div>
<div class="no" style="top:737px">699</div>
<div class="no" style="top:756px">700</div>
<div class="no" style="top:775px">701</div>
<div class="no" style="top:794px">702</div>
<div class="no" style="top:813px">703</div>
<div class="no" style="top:832px">704</div>
<div class="no" style="top:851px">705</div>
<div class="no" style="top:870px">706</div>
<div class="no" style="top:889px">707</div>
<div class="no" style="top:908px">708</div>
<div class="no" style="top:927px">709</div>
<div class="fl" style="top:54px;height:478px"></div>
<div class="fl red" style="top:532px;height:414px"></div>
<div class="fb" style="top:57px"><i></i></div>
<div class="fb" style="top:114px"><i></i></div>
<div class="fb" style="top:133px"><i></i></div>
<div class="ft" style="top:233px"></div>
<div class="ft" style="top:252px"></div>
<div class="fb" style="top:266px"><i></i></div>
<div class="fb" style="top:285px"><i></i></div>
<div class="ft" style="top:385px"></div>
<div class="fb" style="top:399px"><i></i></div>
<div class="ft" style="top:499px"></div>
<div class="ft" style="top:518px"></div>
<div class="fb allred" style="top:532px"><i></i></div>
<div class="fb halfred" style="top:551px"><i></i></div>
<div class="ft red" style="top:613px"></div>
<div class="fb halfred" style="top:627px"><i></i></div>
<div class="ft red" style="top:708px"></div>
<div class="fb halfred" style="top:722px"><i></i></div>
<div class="ft red" style="top:803px"></div>
<div class="fb halfred" style="top:817px"><i></i></div>
<div class="ft red" style="top:898px"></div>
<div class="ft red" style="top:917px"></div>
<div class="vs" style="left:925px;top:54px;height:893px"></div>
<svg class="arr" style="left:929px;top:59px" width="9" height="8" viewBox="0 0 9 8"><path d="M1 6.5 L4.5 2.5 L8 6.5" fill="none" stroke="#606060" stroke-width="2"/></svg>
<svg class="arr" style="left:929px;top:932px" width="9" height="8" viewBox="0 0 9 8"><path d="M1 1.5 L4.5 5.5 L8 1.5" fill="none" stroke="#606060" stroke-width="2"/></svg>
<div class="thumb" style="left:925px;top:371px;width:15px;height:21px"></div>
<div class="hs" style="top:946px;width:942px"></div>
<svg class="arr" style="left:6px;top:950px" width="8" height="9" viewBox="0 0 8 9"><path d="M6.5 1 L2.5 4.5 L6.5 8" fill="none" stroke="#606060" stroke-width="2"/></svg>
<svg class="arr" style="left:913px;top:950px" width="8" height="9" viewBox="0 0 8 9"><path d="M1.5 1 L5.5 4.5 L1.5 8" fill="none" stroke="#606060" stroke-width="2"/></svg>
<div class="thumb" style="left:17px;top:946px;width:757px;height:13px"></div>
</div>
<div class="caret" style="left:717px;top:377px"></div>
</div></body></html>
